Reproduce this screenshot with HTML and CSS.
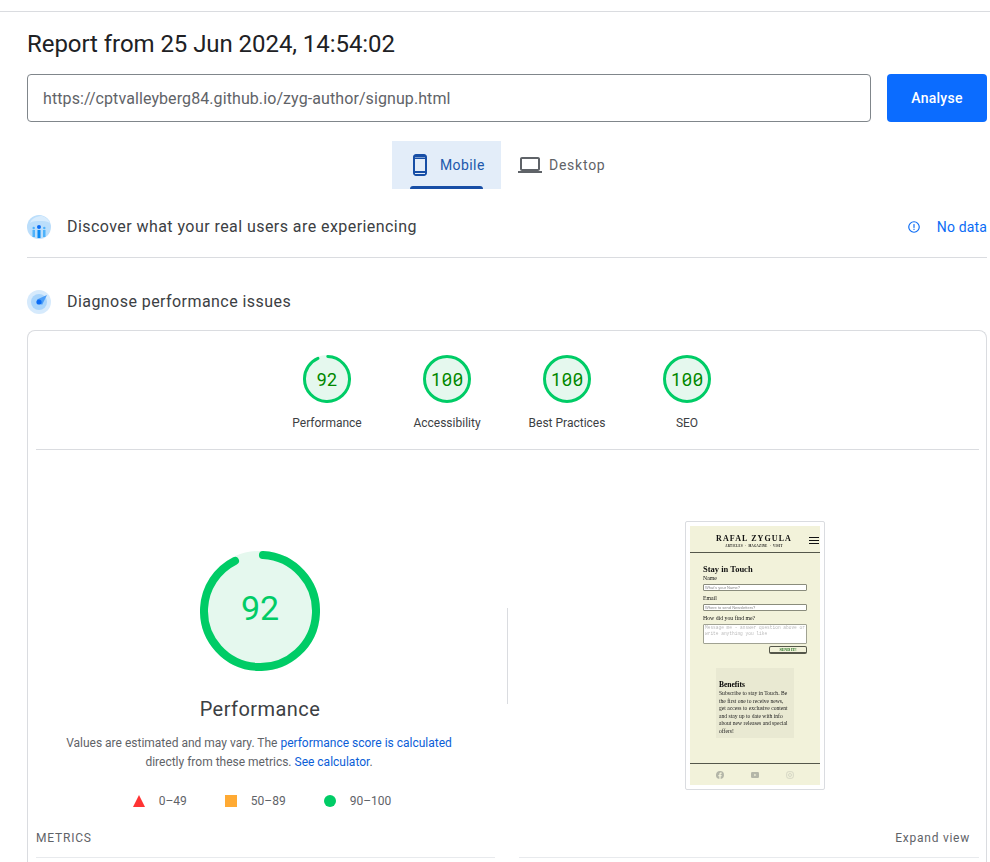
FILE: index.html
```html
<!DOCTYPE html>
<html lang="en">
<head>
<meta charset="utf-8">
<title>PageSpeed Insights</title>
<link rel="stylesheet" href="styles.css">
</head>
<body>
<div class="page">
  <h1 class="title">Report from 25 Jun 2024, 14:54:02</h1>
  <div class="url-row">
    <div class="url-input">https://cptvalleyberg84.github.io/zyg-author/signup.html</div>
    <button class="analyse">Analyse</button>
  </div>
  <div class="tabs">
    <div class="tab tab-active">
      <svg class="tab-icon" viewBox="0 0 24 24"><path d="M16 1H8C6.34 1 5 2.34 5 4v16c0 1.66 1.34 3 3 3h8c1.66 0 3-1.34 3-3V4c0-1.66-1.34-3-3-3zm1 17H7V6h10v12zm0 3H7v-1h10v1zM7 4h10v.5H7V4z" fill="#174ea6" fill-rule="evenodd"/></svg>
      <span>Mobile</span>
    </div>
    <div class="tab tab-desktop">
      <svg class="tab-icon" viewBox="0 0 24 24"><path d="M20 18c1.1 0 2-.9 2-2V6c0-1.1-.9-2-2-2H4c-1.1 0-2 .9-2 2v10c0 1.1.9 2 2 2H0v2h24v-2h-4zM4 6h16v10H4V6z" fill="#5f6368"/></svg>
      <span>Desktop</span>
    </div>
  </div>
  <div class="section-row section-discover">
    <svg class="section-icon" viewBox="0 0 24 24">
      <circle cx="12" cy="12" r="12" fill="#bbdefb"/>
      <path d="M3 8C5 2 12 1 15 1c4 1 6 3 8 7-4-2-6-2-10-2S6 6 3 8z" fill="#d8ecfd"/>
      <circle cx="12" cy="12" r="2" fill="#0b6cf5"/>
      <rect x="10.500" y="15" width="3" height="8" fill="#0b8cf5"/>
      <rect x="5.500" y="15" width="2.500" height="7" fill="#4db2fb"/>
      <rect x="16" y="15" width="2.500" height="7" fill="#4db2fb"/>
      <circle cx="6.700" cy="13" r="1.200" fill="#4db2fb"/>
      <circle cx="17.300" cy="13" r="1.200" fill="#4db2fb"/>
    </svg>
    <span class="section-label">Discover what your real users are experiencing</span>
    <div class="no-data">
      <svg class="info-icon" viewBox="0 0 24 24"><circle cx="12" cy="12" r="9" fill="none" stroke="#0b6cf5" stroke-width="2"/><rect x="11" y="7" width="2" height="6.500" fill="#0b6cf5"/><rect x="11" y="15" width="2" height="2" fill="#0b6cf5"/></svg>
      <span>No data</span>
    </div>
  </div>
  <div class="section-row section-diagnose">
    <svg class="section-icon" viewBox="0 0 24 24">
      <circle cx="12" cy="12" r="12" fill="#d6eafc"/>
      <circle cx="12" cy="12" r="8" fill="#a8d4fb"/>
      <path d="M10 9.500 L20 5 L15 15 Z" fill="#4a9df8"/>
      <circle cx="12" cy="12" r="2.600" fill="#0b6cf5"/>
    </svg>
    <span class="section-label">Diagnose performance issues</span>
  </div>
  <div class="card">
    <div class="scores">
      <div class="score">
        <svg class="gauge" viewBox="0 0 48 48"><circle cx="24" cy="24" r="22.500" class="gauge-bg"/><circle cx="24" cy="24" r="22.500" class="gauge-arc" pathLength="100" stroke-dasharray="92.800 100" transform="rotate(-88 24 24)"/></svg>
        <span class="gauge-value">92</span>
        <span class="score-label">Performance</span>
      </div>
      <div class="score">
        <svg class="gauge" viewBox="0 0 48 48"><circle cx="24" cy="24" r="22.500" class="gauge-bg"/></svg>
        <span class="gauge-value">100</span>
        <span class="score-label">Accessibility</span>
      </div>
      <div class="score">
        <svg class="gauge" viewBox="0 0 48 48"><circle cx="24" cy="24" r="22.500" class="gauge-bg"/></svg>
        <span class="gauge-value">100</span>
        <span class="score-label">Best Practices</span>
      </div>
      <div class="score">
        <svg class="gauge" viewBox="0 0 48 48"><circle cx="24" cy="24" r="22.500" class="gauge-bg"/></svg>
        <span class="gauge-value">100</span>
        <span class="score-label">SEO</span>
      </div>
    </div>
    <div class="detail">
      <div class="detail-left">
        <div class="big-gauge">
          <svg viewBox="0 0 120 120"><circle cx="60" cy="60" r="56" class="big-bg"/><circle cx="60" cy="60" r="56" class="big-arc" pathLength="100" stroke-dasharray="91.800 100" transform="rotate(-87 60 60)"/></svg>
          <span class="big-value">92</span>
        </div>
        <div class="big-label">Performance</div>
        <p class="note">Values are estimated and may vary. The <a class="link">performance score is calculated</a> directly from these metrics. <a class="link">See calculator</a>.</p>
        <div class="legend">
          <span class="legend-item legend-bad"><svg viewBox="0 0 12 12"><path d="M6 0 12 12H0z" fill="#ff3333"/></svg>0–49</span>
          <span class="legend-item legend-mid"><svg viewBox="0 0 12 12"><rect width="12" height="12" fill="#ffaa33"/></svg>50–89</span>
          <span class="legend-item"><svg viewBox="0 0 12 12"><circle cx="6" cy="6" r="6" fill="#00cc66"/></svg>90–100</span>
        </div>
      </div>
      <div class="detail-divider"></div>
      <div class="detail-right">
        <div class="shot">
          <div class="mini">
            <div class="mini-header">
              <div class="mini-brand">
                <div class="mini-name">RAFAL ZYGULA</div>
                <div class="mini-nav">ARTICLES &nbsp;·&nbsp; MAGAZINE &nbsp;·&nbsp; VISIT</div>
              </div>
              <div class="mini-burger"><i></i><i></i><i></i></div>
            </div>
            <div class="mini-form">
              <div class="mini-h">Stay in Touch</div>
              <div class="mini-l">Name</div>
              <div class="mini-i">What's your Name?</div>
              <div class="mini-l mini-l2">Email</div>
              <div class="mini-i">Where to send Newsletters?</div>
              <div class="mini-l mini-l3">How did you find me?</div>
              <div class="mini-t">Message me - answer question above or write anything you like</div>
              <div class="mini-send">SEND IT!</div>
            </div>
            <div class="mini-benefits">
              <div class="mini-bh">Benefits</div>
              <div class="mini-bt">Subscribe to stay in Touch. Be the first one to receive news, get access to exclusive content and stay up to date with info about new releases and special offers!</div>
            </div>
            <div class="mini-footer">
              <svg viewBox="0 0 24 24"><path d="M24 12a12 12 0 1 0-14 11.900V15.500H7V12h3V9.400c0-3 1.800-4.700 4.500-4.700 1.300 0 2.700.2 2.700.2v3h-1.500c-1.500 0-2 .9-2 1.900V12h3.300l-.5 3.500H14v8.400A12 12 0 0 0 24 12z" fill="#b4b6a8"/></svg>
              <svg viewBox="0 0 24 24"><rect y="3" width="24" height="18" rx="4" fill="#b4b6a8"/><path d="M10 8.500 16 12l-6 3.500z" fill="#f2f2da"/></svg>
              <svg viewBox="0 0 24 24"><rect x="2" y="2" width="20" height="20" rx="6" fill="none" stroke="#c8cabb" stroke-width="2"/><circle cx="12" cy="12" r="4.500" fill="none" stroke="#c8cabb" stroke-width="2"/></svg>
            </div>
          </div>
        </div>
      </div>
    </div>
    <div class="metrics-head">
      <div class="metrics-left"><span class="metrics-title">METRICS</span></div>
      <div class="metrics-right"><span class="expand">Expand view</span></div>
    </div>
  </div>
</div>
</body>
</html>
```
FILE: styles.css
```css
html, body {
  margin: 0;
  padding: 0;
  background: #fff;
}
body {
  height: 862px;
  overflow: hidden;
  font-family: Roboto, "Liberation Sans", sans-serif;
  color: #202124;
}
.page {
  margin-top: 11px;
  border-top: 1px solid #dadce0;
  padding: 0 3px 0 27px;
}
.title {
  margin: 0;
  padding-top: 17px;
  height: 46px;
  box-sizing: border-box;
  font-size: 24px;
  line-height: 30px;
  font-weight: 400;
  letter-spacing: -0.06px;
  color: #202124;
}
.url-row {
  display: flex;
  gap: 16px;
  height: 48px;
  margin-top: 16px;
}
.url-input {
  flex: 1;
  box-sizing: border-box;
  border: 1px solid #80868b;
  border-radius: 4px;
  padding: 0 15px;
  font-size: 16px;
  line-height: 47px;
  letter-spacing: 0.09px;
  color: #5f6368;
}
.analyse {
  width: 100px;
  border: 0;
  border-radius: 4px;
  background: #0b6cff;
  color: #fff;
  font: 500 14px Roboto, sans-serif;
  letter-spacing: 0.25px;
}
.tabs {
  display: flex;
  margin: 19px 0 0 365px;
  height: 48px;
}
.tab {
  display: flex;
  align-items: center;
  gap: 7px;
  width: 109px;
  box-sizing: border-box;
  padding-left: 17px;
  font-size: 14px;
  font-weight: 450;
  letter-spacing: 0.75px;
  color: #5f6368;
  position: relative;
}
.tab-active {
  background: #e3edf9;
  color: #2058ac;
  padding-left: 16px;
  gap: 8px;
  letter-spacing: 0.4px;
}
.tab-active::after {
  content: "";
  position: absolute;
  left: 18px;
  width: 73px;
  bottom: 0;
  height: 3px;
  background: #174ea6;
  border-radius: 3px 3px 0 0;
}
.tab-icon {
  width: 24px;
  height: 24px;
}
.section-row {
  display: flex;
  align-items: center;
  height: 24px;
}
.section-discover {
  margin-top: 26px;
  padding-bottom: 18px;
  border-bottom: 1px solid #dadce0;
}
.section-diagnose {
  margin-top: 32px;
}
.section-icon {
  width: 24px;
  height: 24px;
  margin-right: 16px;
}
.section-label {
  margin-top: -1px;
  font-size: 16px;
  font-weight: 450;
  letter-spacing: 0.44px;
  color: #3c4043;
}
.no-data {
  margin-left: auto;
  display: flex;
  align-items: center;
  gap: 16px;
  font-size: 14px;
  letter-spacing: 0.15px;
  color: #0b6cf5;
}
.info-icon {
  width: 14px;
  height: 14px;
}
.card {
  margin-top: 16px;
  border: 1px solid #dadce0;
  border-bottom: 0;
  border-radius: 8px 8px 0 0;
  padding: 0 7px 0 8px;
  height: 533px;
  box-sizing: border-box;
}
.scores {
  display: flex;
  justify-content: center;
  padding: 24px 1px 0 0;
  border-bottom: 1px solid #dadce0;
  height: 119px;
  box-sizing: border-box;
}
.score {
  width: 120px;
  display: flex;
  flex-direction: column;
  align-items: center;
  position: relative;
}
.gauge {
  width: 48px;
  height: 48px;
}
.gauge-bg {
  fill: #e5f8ee;
  stroke: #00cc66;
  stroke-width: 3;
}
.gauge-arc {
  fill: none;
  stroke: #00cc66;
  stroke-width: 3;
  stroke-linecap: round;
}
.score:first-child .gauge-bg {
  stroke: #e5f8ee;
}
.gauge-value {
  position: absolute;
  top: 13px;
  left: 0;
  right: 0;
  text-align: center;
  font-family: "Roboto Mono", "DejaVu Sans Mono", monospace;
  font-size: 18px;
  line-height: 22px;
  color: #008800;
}
.score-label {
  margin-top: 12px;
  font-size: 12px;
  line-height: 16px;
  color: #3c4043;
}
.detail {
  display: flex;
  height: 373px;
}
.detail-left {
  width: 448px;
  display: flex;
  flex-direction: column;
  align-items: center;
  padding-top: 101px;
  box-sizing: border-box;
}
.big-gauge {
  width: 120px;
  height: 120px;
  position: relative;
}
.big-gauge svg {
  width: 120px;
  height: 120px;
  display: block;
}
.big-bg {
  fill: #e5f8ee;
  stroke: #e5f8ee;
  stroke-width: 8;
}
.big-arc {
  fill: none;
  stroke: #00cc66;
  stroke-width: 8;
  stroke-linecap: round;
}
.big-value {
  position: absolute;
  inset: 0;
  text-align: center;
  line-height: 114px;
  font-size: 34px;
  color: #00cc66;
}
.big-label {
  margin-top: 23px;
  font-size: 20px;
  line-height: 30px;
  letter-spacing: 0.45px;
  color: #3c4043;
}
.note {
  margin: 10px 2px 0 0;
  width: 400px;
  text-align: center;
  font-size: 12px;
  line-height: 19px;
  color: #5f6368;
}
.link {
  color: #0b5ed7;
}
.legend {
  display: flex;
  gap: 38px;
  margin: 21px 0 0 4px;
  font-size: 12px;
  line-height: 16px;
  color: #5f6368;
}
.legend-item {
  display: flex;
  align-items: center;
  gap: 14px;
}
.legend-item svg {
  width: 12px;
  height: 12px;
}
.detail-divider {
  width: 1px;
  height: 96px;
  margin: 158px 0 0 23px;
  background: #dadce0;
}
.detail-right {
  flex: 1;
  padding: 71px 0 0 177px;
}
.shot {
  width: 140px;
  height: 269px;
  box-sizing: border-box;
  border: 1px solid #dadce0;
  border-radius: 2px;
  padding: 4px;
}
.mini {
  height: 259px;
  background: #f2f2da;
  font-family: "Liberation Serif", serif;
  color: #111;
  display: flex;
  flex-direction: column;
  filter: blur(0.4px);
}
.mini-header {
  height: 27px;
  box-sizing: border-box;
  border-bottom: 1px solid #55574a;
  display: flex;
  padding-top: 8px;
}
.mini-brand {
  flex: 1;
  text-align: center;
  padding-left: 9px;
}
.mini-name {
  font-size: 8px;
  font-weight: 700;
  line-height: 9px;
  letter-spacing: 1.1px;
}
.mini-nav {
  font-size: 3px;
  line-height: 5px;
  margin-top: 1px;
  font-weight: 700;
  letter-spacing: 0.3px;
}
.mini-burger {
  width: 10px;
  margin: 3px 1px 0 0;
  display: flex;
  flex-direction: column;
  gap: 2px;
}
.mini-burger i {
  display: block;
  height: 1px;
  background: #111;
}
.mini-form {
  padding: 11px 13px 0;
  display: flex;
  flex-direction: column;
  height: 103px;
  box-sizing: border-box;
}
.mini-h {
  font-size: 8.500px;
  line-height: 10px;
  font-weight: 700;
}
.mini-l {
  font-size: 5.800px;
  line-height: 7px;
  margin-top: 1px;
}
.mini-l2 {
  margin-top: 4px;
}
.mini-l3 {
  margin-top: 4px;
}
.mini-i {
  height: 7px;
  margin-top: 2px;
  box-sizing: border-box;
  background: #fff;
  border: 1px solid #8a8c7c;
  border-radius: 1px;
  font-family: "Liberation Sans", sans-serif;
  font-size: 4px;
  line-height: 5px;
  color: #888;
  padding-left: 1px;
  overflow: hidden;
  white-space: nowrap;
}
.mini-t {
  height: 20px;
  margin-top: 2px;
  box-sizing: border-box;
  background: #fff;
  border: 1px solid #a0a292;
  border-radius: 1px;
  font-family: "Liberation Mono", monospace;
  font-size: 4.500px;
  line-height: 6px;
  color: #bbb;
  padding: 0 1px;
  overflow: hidden;
}
.mini-send {
  align-self: flex-end;
  width: 38px;
  height: 8px;
  margin-top: 2px;
  box-sizing: border-box;
  border: 1px solid #55574a;
  border-radius: 2px;
  border-bottom-width: 2px;
  text-align: center;
  font-size: 4px;
  line-height: 5px;
  font-weight: 700;
  color: #1e6d1e;
}
.mini-benefits {
  margin: 12px 0 0 26px;
  width: 78px;
  height: 70px;
  box-sizing: border-box;
  background: #e9e9d2;
  padding: 12px 3px 0;
}
.mini-bh {
  font-size: 7.500px;
  line-height: 10px;
  font-weight: 700;
  color: #000;
}
.mini-bt {
  font-size: 5.600px;
  line-height: 7.500px;
  color: #222;
}
.mini-footer {
  margin-top: 25px;
  border-top: 1px solid #55574a;
  flex: 1;
  display: flex;
  align-items: center;
  justify-content: center;
  gap: 27px;
}
.mini-footer svg {
  width: 8px;
  height: 8px;
}
.metrics-head {
  display: flex;
  gap: 24px;
  height: 36px;
}
.metrics-left, .metrics-right {
  height: 34px;
  border-bottom: 1px solid #e8eaed;
  display: flex;
  align-items: center;
  font-size: 12px;
}
.metrics-left {
  flex: 0 0 459px;
}
.metrics-right {
  flex: 1;
  justify-content: flex-end;
  padding-right: 9px;
}
.metrics-title {
  margin-bottom: 4px;
  letter-spacing: 0.8px;
  color: #5f6368;
}
.expand {
  margin-bottom: 4px;
  letter-spacing: 0.75px;
  color: #5f6368;
}
```
